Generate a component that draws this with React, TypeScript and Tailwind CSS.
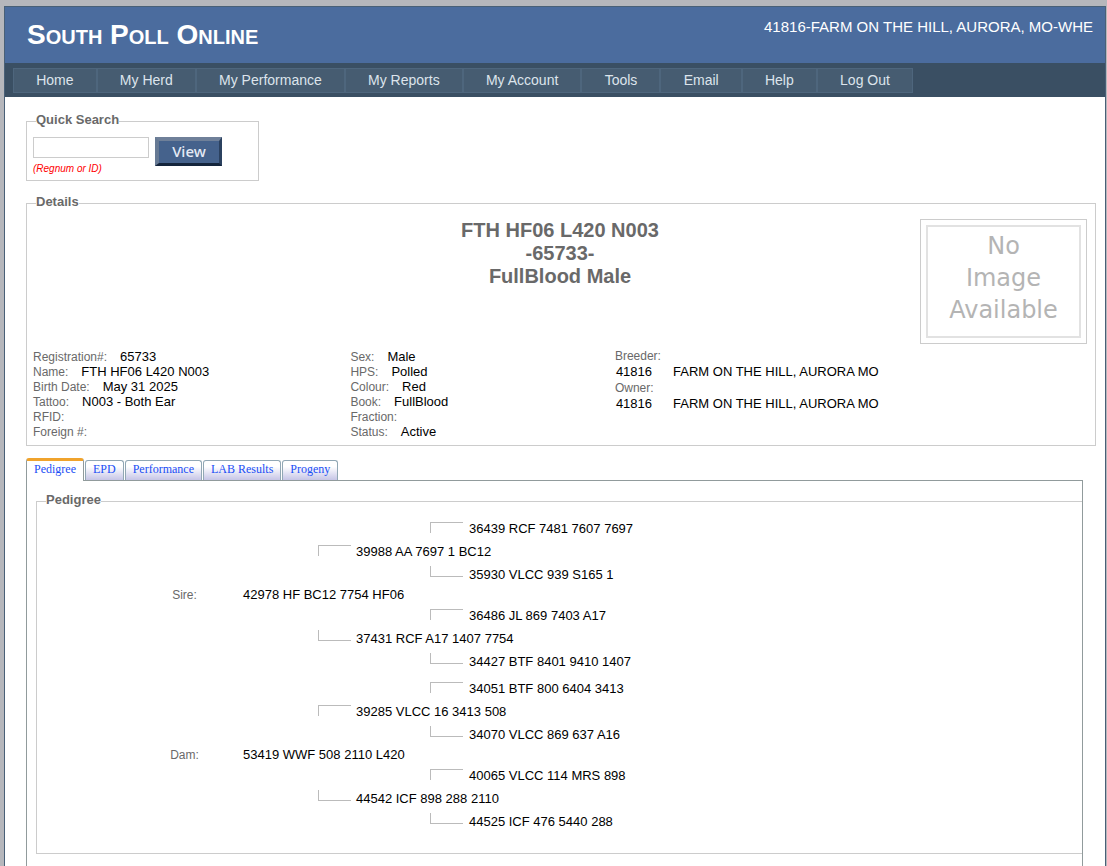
import { useState } from "react";

type Field = { label: string; value: string };

type PedigreeRow = {
  gen: 1 | 2 | 3;
  text: string;
  label?: string;
  side?: "up" | "down";
};

const menuItems = [
  "Home",
  "My Herd",
  "My Performance",
  "My Reports",
  "My Account",
  "Tools",
  "Email",
  "Help",
  "Log Out",
];

const tabs = ["Pedigree", "EPD", "Performance", "LAB Results", "Progeny"];

const leftFields: Field[] = [
  { label: "Registration#:", value: "65733" },
  { label: "Name:", value: "FTH HF06 L420 N003" },
  { label: "Birth Date:", value: "May 31 2025" },
  { label: "Tattoo:", value: "N003 - Both Ear" },
  { label: "RFID:", value: "" },
  { label: "Foreign #:", value: "" },
];

const middleFields: Field[] = [
  { label: "Sex:", value: "Male" },
  { label: "HPS:", value: "Polled" },
  { label: "Colour:", value: "Red" },
  { label: "Book:", value: "FullBlood" },
  { label: "Fraction:", value: "" },
  { label: "Status:", value: "Active" },
];

const people = [
  { role: "Breeder:", id: "41816", name: "FARM ON THE HILL, AURORA MO" },
  { role: "Owner:", id: "41816", name: "FARM ON THE HILL, AURORA MO" },
];

const sireRows: PedigreeRow[] = [
  { gen: 3, text: "36439 RCF 7481 7607 7697", side: "up" },
  { gen: 2, text: "39988 AA 7697 1 BC12", side: "up" },
  { gen: 3, text: "35930 VLCC 939 S165 1", side: "down" },
  { gen: 1, text: "42978 HF BC12 7754 HF06", label: "Sire:" },
  { gen: 3, text: "36486 JL 869 7403 A17", side: "up" },
  { gen: 2, text: "37431 RCF A17 1407 7754", side: "down" },
  { gen: 3, text: "34427 BTF 8401 9410 1407", side: "down" },
];

const damRows: PedigreeRow[] = [
  { gen: 3, text: "34051 BTF 800 6404 3413", side: "up" },
  { gen: 2, text: "39285 VLCC 16 3413 508", side: "up" },
  { gen: 3, text: "34070 VLCC 869 637 A16", side: "down" },
  { gen: 1, text: "53419 WWF 508 2110 L420", label: "Dam:" },
  { gen: 3, text: "40065 VLCC 114 MRS 898", side: "up" },
  { gen: 2, text: "44542 ICF 898 288 2110", side: "down" },
  { gen: 3, text: "44525 ICF 476 5440 288", side: "down" },
];

function FieldList({ fields }: { fields: Field[] }) {
  return (
    <dl>
      {fields.map((field) => (
        <div key={field.label} className="flex h-[15px] items-baseline gap-[13px] whitespace-nowrap">
          <dt className="text-xs leading-[15px]">{field.label}</dt>
          <dd className="leading-[15px] text-black">{field.value || "\u00a0"}</dd>
        </div>
      ))}
    </dl>
  );
}

function Branch({ side }: { side?: "up" | "down" }) {
  return side === "up" ? (
    <span className="mt-[5px] block h-[11px] w-[33px] border-t border-l border-[#bbb]" />
  ) : (
    <span className="mt-[3px] block h-[11px] w-[33px] border-b border-l border-[#bbb]" />
  );
}

function PedigreeGroup({ rows }: { rows: PedigreeRow[] }) {
  return (
    <ul>
      {rows.map((row) => (
        <li
          key={row.text}
          className={`grid grid-cols-[89px_117px_75px_38px_74px_39px_1fr] whitespace-nowrap ${
            row.gen === 1 ? "h-[18px] leading-[18px]" : "h-[23px] leading-[23px]"
          }`}
        >
          {row.gen === 1 && (
            <>
              <span className="col-start-2 text-center text-xs leading-[18px]">{row.label}</span>
              <span className="col-start-3 text-black">{row.text}</span>
            </>
          )}
          {row.gen === 2 && (
            <>
              <span className="col-start-4">
                <Branch side={row.side} />
              </span>
              <span className="col-start-5 text-black">{row.text}</span>
            </>
          )}
          {row.gen === 3 && (
            <>
              <span className="col-start-6">
                <Branch side={row.side} />
              </span>
              <span className="col-start-7 text-black">{row.text}</span>
            </>
          )}
        </li>
      ))}
    </ul>
  );
}

export default function App() {
  const [search, setSearch] = useState("");
  const [activeTab, setActiveTab] = useState("Pedigree");

  return (
    <div className="flex min-h-screen flex-col bg-[#b6b7bc] pt-1.5 pr-px pl-1 font-['Liberation_Sans',Arial,sans-serif] text-[13px] leading-[15px] text-[#696969]">
      <div className="grow border border-b-0 border-[#496077] bg-white">
        <header>
          <div className="flex h-14 items-start justify-between bg-[#4b6c9e] pr-3 pl-[22px] text-white">
            <h1 className="pt-3 text-[28px] leading-8 font-bold [font-variant:small-caps]">South Poll Online</h1>
            <span className="pt-2.5 text-[15px] leading-5">41816-FARM ON THE HILL, AURORA, MO-WHE</span>
          </div>
          <nav className="h-[34px] bg-[#3a4f63] px-2 pt-[5px]">
            <ul className="flex max-w-[900px]">
              {menuItems.map((item) => (
                <li key={item} className="grow">
                  <a
                    href="#"
                    className="block h-[25px] border border-[#4e667d] bg-[#465c71] px-[22px] text-center text-sm leading-[23px] whitespace-nowrap text-[#dde4ec] hover:bg-[#bfcbd6] hover:text-[#465c71]"
                  >
                    {item}
                  </a>
                </li>
              ))}
            </ul>
          </nav>
        </header>

        <main className="pt-[15px] pr-[9px] pl-[21px]">
          <fieldset className="w-[233px] border border-[#ccc] px-1.5 pt-1.5 pb-1">
            <legend className="ml-[3px] pb-1 font-bold">Quick Search</legend>
            <form className="flex items-start gap-1.5" onSubmit={(e) => e.preventDefault()}>
              <div className="w-[116px]">
                <input
                  id="regnum"
                  type="text"
                  value={search}
                  onChange={(e) => setSearch(e.target.value)}
                  className="block h-[21px] w-full border border-[#ccc] px-1 text-black outline-none"
                />
                <label htmlFor="regnum" className="mt-1 block text-[10px] leading-[14px] text-[#f00] italic">
                  (Regnum or ID)
                </label>
              </div>
              <button
                type="submit"
                className="h-[29px] w-[67px] border-t-4 border-r-3 border-b-3 border-l-4 border-t-[#6f8099] border-r-[#2b415f] border-b-[#14253c] border-l-[#677a94] bg-[#45628c] pb-0.5 font-['Noto_Sans',sans-serif] text-[15px] leading-5 font-medium text-[#e4eaf5]"
              >
                View
              </button>
            </form>
          </fieldset>

          <fieldset className="mt-[13px] border border-[#ccc] pt-1.5 pb-1.5 pl-1.5">
            <legend className="ml-[3px] pb-1 font-bold">Details</legend>
            <div className="mb-[5px] grid grid-cols-[1fr_auto_1fr] pr-2">
              <h2 className="col-start-2 text-center text-xl leading-[23px] font-bold">
                FTH HF06 L420 N003
                <br />
                -65733-
                <br />
                FullBlood Male
              </h2>
              <div className="h-[125px] w-[167px] justify-self-end border border-[#ccc] p-[5px]">
                <div className="h-full border-2 border-[#e2e2e2] pt-[3px] text-center font-['DejaVu_Sans',sans-serif] text-2xl leading-8 text-[#b4b4b4]">
                  No
                  <br />
                  Image
                  <br />
                  Available
                </div>
              </div>
            </div>
            <div className="mr-1 grid grid-cols-[30%_25%_45%]">
              <FieldList fields={leftFields} />
              <FieldList fields={middleFields} />
              <dl>
                {people.map((person) => (
                  <div key={person.role}>
                    <dt className="text-xs leading-[15px]">{person.role}</dt>
                    <dd className="mb-0.5 flex gap-[21px] pl-px leading-[15px] whitespace-nowrap text-black">
                      <span>{person.id}</span>
                      <span>{person.name}</span>
                    </dd>
                  </div>
                ))}
              </dl>
            </div>
          </fieldset>

          <div className="mt-3 mr-[13px]">
            <div role="tablist" className="flex h-[22px] items-end gap-px font-['Liberation_Serif',serif]">
              {tabs.map((tab) => (
                <button
                  key={tab}
                  role="tab"
                  aria-selected={tab === activeTab}
                  onClick={() => setActiveTab(tab)}
                  className={
                    tab === activeTab
                      ? "relative -mb-px h-[23px] rounded-t-[3px] border-x border-t-[3px] border-x-[#919b9c] border-t-[#f0a32c] bg-white px-[7px] pb-1 text-xs leading-4 text-[#1a4ef5]"
                      : "h-5 rounded-t-[3px] border border-b-0 border-[#91a7b4] bg-linear-to-b from-white from-30% to-[#c6c5e6] px-[7px] pb-1 text-xs leading-4 text-[#1a4ef5]"
                  }
                >
                  {tab}
                </button>
              ))}
            </div>
            <div role="tabpanel" className="border border-b-0 border-[#919b9c] pt-[11px] pb-3 pl-[9px]">
              <fieldset className="border border-r-0 border-[#ccc] pt-1.5 pb-5">
                <legend className="ml-[9px] pb-1 font-bold">Pedigree</legend>
                <div className="flex flex-col gap-1">
                  <PedigreeGroup rows={sireRows} />
                  <PedigreeGroup rows={damRows} />
                </div>
              </fieldset>
            </div>
          </div>
        </main>
      </div>
    </div>
  );
}
